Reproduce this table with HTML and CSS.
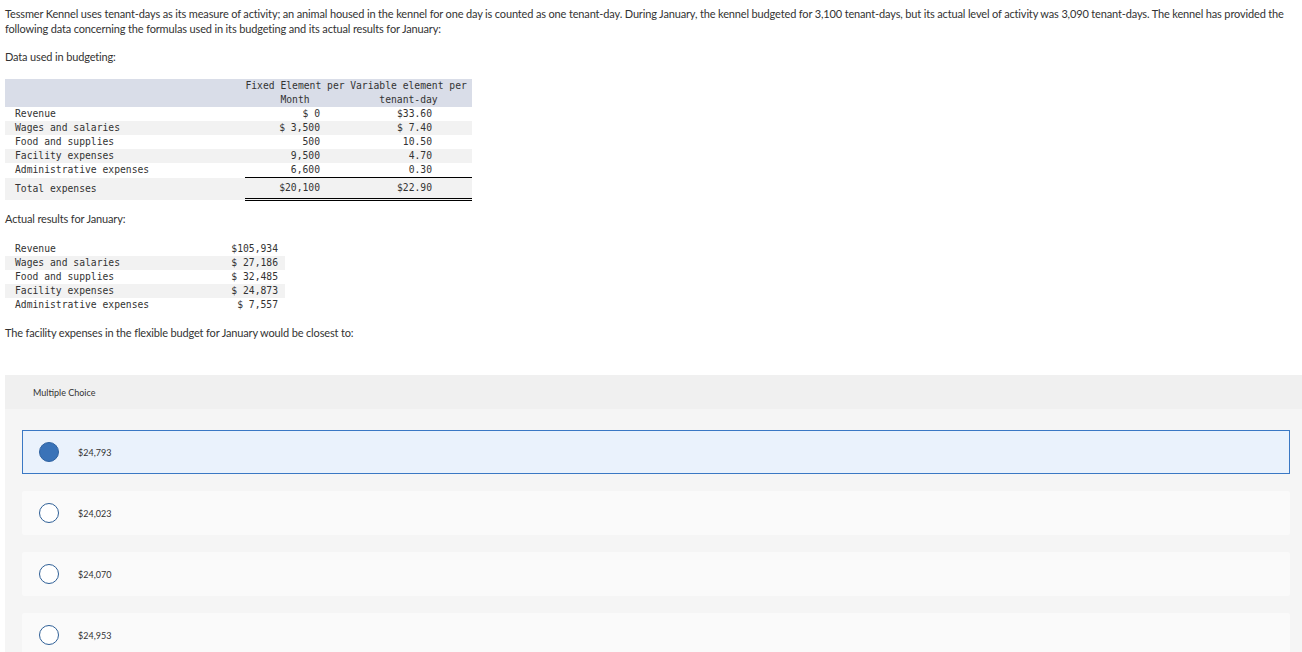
FILE: index.html
```html
<!DOCTYPE html>
<html>
<head>
<meta charset="utf-8">
<link rel="stylesheet" href="styles.css">
</head>
<body>
<div class="page">
  <p class="txt">Tessmer Kennel uses tenant-days as its measure of activity; an animal housed in the kennel for one day is counted as one tenant-day. During January, the kennel budgeted for 3,100 tenant-days, but its actual level of activity was 3,090 tenant-days. The kennel has provided the following data concerning the formulas used in its budgeting and its actual results for January:</p>
  <p class="txt">Data used in budgeting:</p>
  <table class="budget">
    <colgroup>
      <col class="c-lbl">
      <col class="c-fix">
      <col class="c-var">
    </colgroup>
    <thead>
      <tr>
        <th class="lbl"></th>
        <th class="fix">Fixed Element per<br>Month</th>
        <th class="var">Variable element per<br>tenant-day</th>
      </tr>
    </thead>
    <tbody>
      <tr><td class="lbl">Revenue</td><td class="fix">$ 0</td><td class="var">$33.60</td></tr>
      <tr class="alt"><td class="lbl">Wages and salaries</td><td class="fix">$ 3,500</td><td class="var">$ 7.40</td></tr>
      <tr><td class="lbl">Food and supplies</td><td class="fix">500</td><td class="var">10.50</td></tr>
      <tr class="alt"><td class="lbl">Facility expenses</td><td class="fix">9,500</td><td class="var">4.70</td></tr>
      <tr><td class="lbl">Administrative expenses</td><td class="fix">6,600</td><td class="var">0.30</td></tr>
      <tr class="alt total"><td class="lbl">Total expenses</td><td class="fix">$20,100</td><td class="var">$22.90</td></tr>
    </tbody>
  </table>
  <p class="txt">Actual results for January:</p>
  <table class="actual">
    <tbody>
      <tr><td class="lbl">Revenue</td><td class="val">$105,934</td></tr>
      <tr class="alt"><td class="lbl">Wages and salaries</td><td class="val">$ 27,186</td></tr>
      <tr><td class="lbl">Food and supplies</td><td class="val">$ 32,485</td></tr>
      <tr class="alt"><td class="lbl">Facility expenses</td><td class="val">$ 24,873</td></tr>
      <tr><td class="lbl">Administrative expenses</td><td class="val">$ 7,557</td></tr>
    </tbody>
  </table>
  <p class="txt">The facility expenses in the flexible budget for January would be closest to:</p>

  <section class="mc">
    <div class="mc-head">Multiple Choice</div>
    <div class="mc-body">
      <div class="opt selected"><span class="radio"></span><span class="opt-txt">$24,793</span></div>
      <div class="opt"><span class="radio"></span><span class="opt-txt">$24,023</span></div>
      <div class="opt"><span class="radio"></span><span class="opt-txt">$24,070</span></div>
      <div class="opt"><span class="radio"></span><span class="opt-txt">$24,953</span></div>
    </div>
  </section>
</div>
</body>
</html>
```

FILE: styles.css
```css
html, body {
  margin: 0;
  padding: 0;
  background: #ffffff;
}
body {
  font-family: "Lato", "Liberation Sans", sans-serif;
  color: #333333;
  overflow: hidden;
}
.page {
  padding: 6px 0 0 5px;
}
.txt {
  margin: 0 0 13px 0;
  font-size: 11px;
  line-height: 15px;
  letter-spacing: -0.15px;
  padding-right: 8px;
}
table {
  border-collapse: collapse;
  font-family: "DejaVu Sans Mono", "Liberation Mono", monospace;
  font-size: 9.7px;
  color: #333333;
}
td, th {
  padding: 0;
  line-height: 14px;
  white-space: nowrap;
}
.budget {
  table-layout: fixed;
  width: 467px;
  margin: 15px 0 10px 0;
}
.c-lbl { width: 240px; }
.c-fix { width: 100px; }
.c-var { width: 127px; }
.budget th {
  background: #d9dde8;
  font-weight: normal;
  text-align: center;
  vertical-align: bottom;
}
.budget .lbl {
  padding-left: 10px;
  text-align: left;
}
.budget td.fix {
  text-align: right;
  padding-right: 25px;
}
.budget td.var {
  text-align: right;
  padding-right: 40px;
}
.alt td {
  background: #f2f2f2;
}
.total td {
  padding-top: 3px;
  padding-bottom: 3px;
}
.total td.fix, .total td.var {
  border-top: 1px solid #000000;
  border-bottom: 3px double #000000;
}
.actual {
  width: 280px;
  margin: 16px 0 13px 0;
}
.actual .lbl {
  padding-left: 10px;
  text-align: left;
}
.actual .val {
  text-align: right;
  padding-right: 7px;
}
.mc {
  margin-top: 35px;
  background: #f5f5f5;
}
.mc-head {
  background: #f0f0f0;
  height: 34px;
  display: flex;
  align-items: center;
  padding-left: 28px;
  font-size: 9px;
  color: #333333;
}
.mc-body {
  display: flex;
  flex-direction: column;
  gap: 17px;
  padding: 21px 12px 20px 17px;
}
.opt {
  height: 44px;
  box-sizing: border-box;
  display: flex;
  align-items: center;
  background: #fafafa;
  border: 1px solid transparent;
  border-radius: 2px;
  padding-left: 16px;
}
.opt.selected {
  background: #eaf2fc;
  border-color: #3a78c4;
  border-radius: 0;
}
.radio {
  width: 20px;
  height: 20px;
  box-sizing: border-box;
  border-radius: 50%;
  border: 1.5px solid #2e5f96;
  background: #ffffff;
  flex: none;
}
.opt.selected .radio {
  background: #3a73b8;
  border-color: #2f62a0;
}
.opt-txt {
  margin-left: 19px;
  font-size: 9px;
  color: #333333;
}
```
